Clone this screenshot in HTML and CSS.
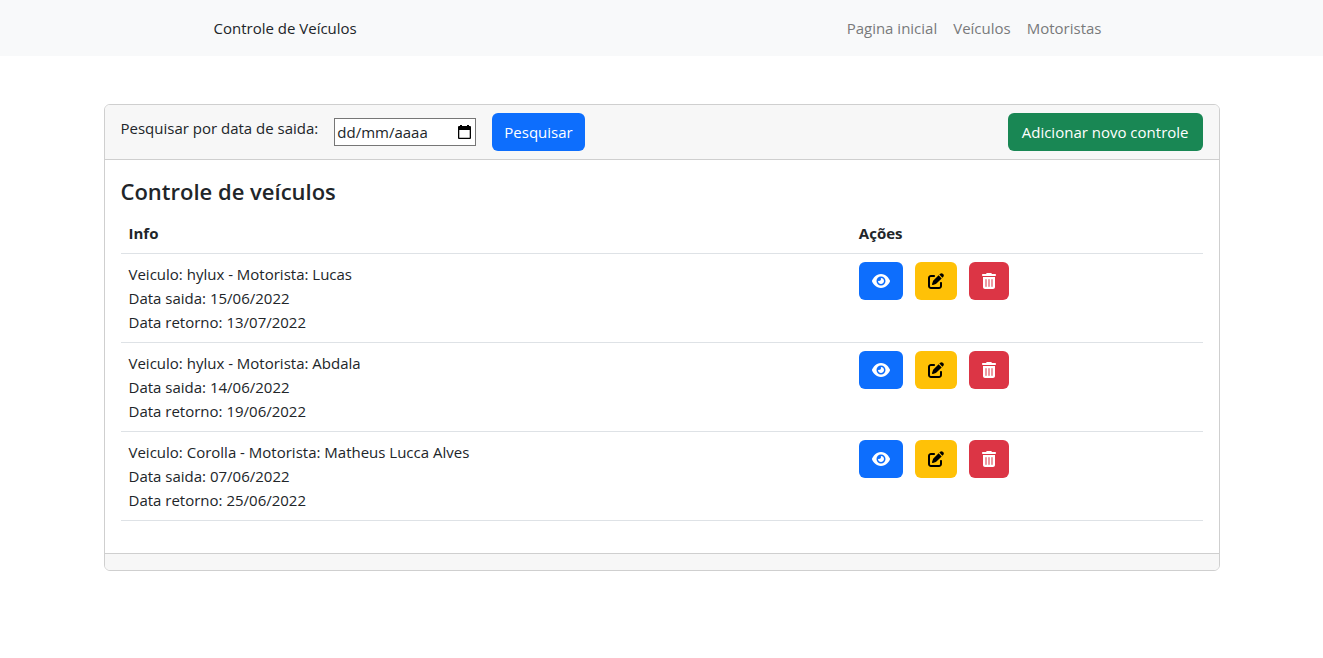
FILE: index.html
```html
<!DOCTYPE html>
<html lang="pt-BR">
<head>
<meta charset="utf-8">
<meta name="viewport" content="width=device-width, initial-scale=1">
<title>Controle de Veículos</title>
<link rel="stylesheet" href="styles.css">
</head>
<body>
<svg class="sprite" aria-hidden="true">
  <symbol id="eye" viewBox="0 0 576 512"><path d="M279.6 160.4C282.4 160.1 285.2 160 288 160C341 160 384 202.1 384 256C384 309 341 352 288 352C234.1 352 192 309 192 256C192 253.2 192.1 250.4 192.4 247.6C201.7 252.1 212.5 256 224 256C259.3 256 288 227.3 288 192C288 180.5 284.1 169.7 279.6 160.4zM480.6 112.6C527.4 156 558.7 207.1 573.5 243.7C576.8 251.6 576.8 260.4 573.5 268.3C558.7 304 527.4 355.1 480.6 399.4C433.5 443.2 368.8 480 288 480C207.2 480 142.5 443.2 95.4 399.4C48.6 355.1 17.3 304 2.5 268.3C-.8 260.4-.8 251.6 2.5 243.7C17.3 207.1 48.6 156 95.4 112.6C142.5 68.8 207.2 32 288 32C368.8 32 433.5 68.8 480.6 112.6zM288 112C208.5 112 144 176.5 144 256C144 335.5 208.5 400 288 400C367.5 400 432 335.5 432 256C432 176.5 367.5 112 288 112z"/></symbol>
  <symbol id="edit" viewBox="0 0 512 512"><path d="M490.3 40.4C512.2 62.3 512.2 97.7 490.3 119.6L460.3 149.7L362.3 51.7L392.4 21.7C414.3-.2 449.7-.2 471.6 21.7L490.3 40.4zM172.4 241.7L339.7 74.3L437.7 172.3L270.3 339.6C264.2 345.8 256.7 350.4 248.4 353.2L159.6 382.8C150.1 385.6 141.5 383.4 135 376.1C128.6 370.5 126.4 361 129.2 352.4L158.8 263.6C161.6 255.3 166.2 247.8 172.4 241.7zM192 64C209.7 64 224 78.3 224 96C224 113.7 209.7 128 192 128H96C78.3 128 64 142.3 64 160V416C64 433.7 78.3 448 96 448H352C369.7 448 384 433.7 384 416V320C384 302.3 398.3 288 416 288C433.7 288 448 302.3 448 320V416C448 469 405 512 352 512H96C43 512 0 469 0 416V160C0 107 43 64 96 64H192z"/></symbol>
  <symbol id="trash" viewBox="0 0 448 512"><path fill-rule="evenodd" d="M135.2 17.7C140.6 6.8 151.7 0 163.8 0H284.2C296.3 0 307.4 6.8 312.8 17.7L320 32H416C433.7 32 448 46.3 448 64C448 81.7 433.7 96 416 96H32C14.3 96 0 81.7 0 64C0 46.3 14.3 32 32 32H128L135.2 17.7zM32 128H416V448C416 483.3 387.3 512 352 512H96C60.7 512 32 483.3 32 448V128zM112 208V432C112 440.8 119.2 448 128 448C136.8 448 144 440.8 144 432V208C144 199.2 136.8 192 128 192C119.2 192 112 199.2 112 208zM208 208V432C208 440.8 215.2 448 224 448C232.8 448 240 440.8 240 432V208C240 199.2 232.8 192 224 192C215.2 192 208 199.2 208 208zM304 208V432C304 440.8 311.2 448 320 448C328.8 448 336 440.8 336 432V208C336 199.2 328.8 192 320 192C311.2 192 304 199.2 304 208z"/></symbol>
</svg>

<nav class="navbar">
  <div class="navbar-inner">
    <a class="brand" href="#">Controle de Veículos</a>
    <div class="nav-links">
      <a href="#">Pagina inicial</a>
      <a href="#">Veículos</a>
      <a href="#">Motoristas</a>
    </div>
  </div>
</nav>

<main class="container">
  <section class="card">
    <header class="card-header">
      <form class="search">
        <label class="search-label" for="saida">Pesquisar por data de saida:</label>
        <div class="date-field">
          <input id="saida" type="text" placeholder="dd/mm/aaaa">
          <button class="picker" type="button" aria-label="Abrir calendário">
            <svg viewBox="0 0 13 14" width="13" height="14"><path fill-rule="evenodd" d="M2 0h2v1h5V0h2v1h1a1 1 0 0 1 1 1v11a1 1 0 0 1-1 1H1a1 1 0 0 1-1-1V2a1 1 0 0 1 1-1h1zM1.300 5v7.700h10.400V5z"/></svg>
          </button>
        </div>
        <button class="btn btn-primary btn-search" type="button">Pesquisar</button>
      </form>
      <a class="btn btn-success" href="#">Adicionar novo controle</a>
    </header>
    <div class="card-body">
      <h4 class="card-title">Controle de veículos</h4>
      <table class="table">
        <thead>
          <tr><th class="col-info" scope="col">Info</th><th scope="col">Ações</th></tr>
        </thead>
        <tbody>
          <tr>
            <td>Veiculo: hylux - Motorista: Lucas<br>Data saida: 15/06/2022<br>Data retorno: 13/07/2022</td>
            <td><div class="actions">
              <button class="btn btn-primary" type="button" aria-label="Ver"><svg class="icon icon-eye"><use href="#eye"/></svg></button>
              <button class="btn btn-warning" type="button" aria-label="Editar"><svg class="icon icon-edit"><use href="#edit"/></svg></button>
              <button class="btn btn-danger" type="button" aria-label="Excluir"><svg class="icon icon-trash"><use href="#trash"/></svg></button>
            </div></td>
          </tr>
          <tr>
            <td>Veiculo: hylux - Motorista: Abdala<br>Data saida: 14/06/2022<br>Data retorno: 19/06/2022</td>
            <td><div class="actions">
              <button class="btn btn-primary" type="button" aria-label="Ver"><svg class="icon icon-eye"><use href="#eye"/></svg></button>
              <button class="btn btn-warning" type="button" aria-label="Editar"><svg class="icon icon-edit"><use href="#edit"/></svg></button>
              <button class="btn btn-danger" type="button" aria-label="Excluir"><svg class="icon icon-trash"><use href="#trash"/></svg></button>
            </div></td>
          </tr>
          <tr>
            <td>Veiculo: Corolla - Motorista: Matheus Lucca Alves<br>Data saida: 07/06/2022<br>Data retorno: 25/06/2022</td>
            <td><div class="actions">
              <button class="btn btn-primary" type="button" aria-label="Ver"><svg class="icon icon-eye"><use href="#eye"/></svg></button>
              <button class="btn btn-warning" type="button" aria-label="Editar"><svg class="icon icon-edit"><use href="#edit"/></svg></button>
              <button class="btn btn-danger" type="button" aria-label="Excluir"><svg class="icon icon-trash"><use href="#trash"/></svg></button>
            </div></td>
          </tr>
        </tbody>
      </table>
    </div>
    <footer class="card-footer"></footer>
  </section>
</main>
</body>
</html>
```

FILE: styles.css
```css
*, *::before, *::after { box-sizing: border-box; }

body {
  margin: 0;
  font-family: "Segoe UI", "Open Sans", "Noto Sans", sans-serif;
  font-size: 15px;
  line-height: 24px;
  color: #212529;
  background: #fff;
}

a { text-decoration: none; }

.sprite { display: none; }

.navbar {
  padding: 16px;
  background: #f8f9fa;
}

.navbar-inner {
  display: flex;
  justify-content: space-between;
  max-width: 896px;
  margin: 0 auto;
}

.brand { color: #212529; }

.nav-links {
  display: flex;
  gap: 16px;
  padding-right: 8px;
}

.nav-links a { color: #797a7b; }

.container {
  max-width: 1140px;
  margin: 48px auto 0;
  padding: 0 12px;
}

.card {
  border: 1px solid #cfcfcf;
  border-radius: 6px;
  overflow: hidden;
}

.card-header {
  display: flex;
  flex-wrap: wrap;
  justify-content: space-between;
  gap: 16px;
  padding: 8px 16px;
  background: #f7f7f7;
  border-bottom: 1px solid #cfcfcf;
}

.search {
  display: flex;
  align-items: center;
  gap: 16px;
}

.search-label { padding-bottom: 8px; }

.date-field {
  display: flex;
  align-items: center;
  width: 142px;
  height: 28px;
  padding: 0 4px 0 2px;
  background: #fff;
  border: 1px solid #767676;
}

.date-field input {
  flex: 1;
  min-width: 0;
  padding: 0;
  border: 0;
  outline: 0;
  font: inherit;
  color: #212529;
  background: none;
}

.date-field input::placeholder { color: #212529; opacity: 1; }

.picker {
  display: flex;
  padding: 0;
  border: 0;
  background: none;
}

.btn {
  display: inline-flex;
  align-items: center;
  justify-content: center;
  height: 38px;
  padding: 0 13px;
  border: 0;
  border-radius: 6px;
  font: inherit;
  color: #fff;
  cursor: pointer;
}

.btn-primary { background: #0d6efd; }
.btn-success { padding: 0 14px; background: #198754; }
.btn-warning { background: #ffc107; color: #000; }
.btn-danger { background: #dc3545; }
.btn-search { padding: 0 12px; }

.card-body { padding: 16px; }

.card-title {
  margin: 0 0 6px;
  font-size: 22px;
  font-weight: 600;
  line-height: 31px;
}

.table {
  width: 100%;
  margin-bottom: 16px;
  border-collapse: separate;
  border-spacing: 0;
}

.table th,
.table td {
  padding: 8px;
  text-align: left;
  vertical-align: top;
  border-bottom: 1px solid #dee2e6;
}

.table th { font-weight: 700; }

.col-info { width: 67.5%; }

.actions {
  display: flex;
  gap: 12px;
}

.icon {
  display: block;
  height: 16px;
  fill: currentColor;
}

.icon-eye { width: 18px; }
.icon-edit { width: 16px; }
.icon-trash { width: 14px; }

.card-footer {
  padding: 8px 16px;
  background: #f7f7f7;
  border-top: 1px solid #cfcfcf;
}
```
